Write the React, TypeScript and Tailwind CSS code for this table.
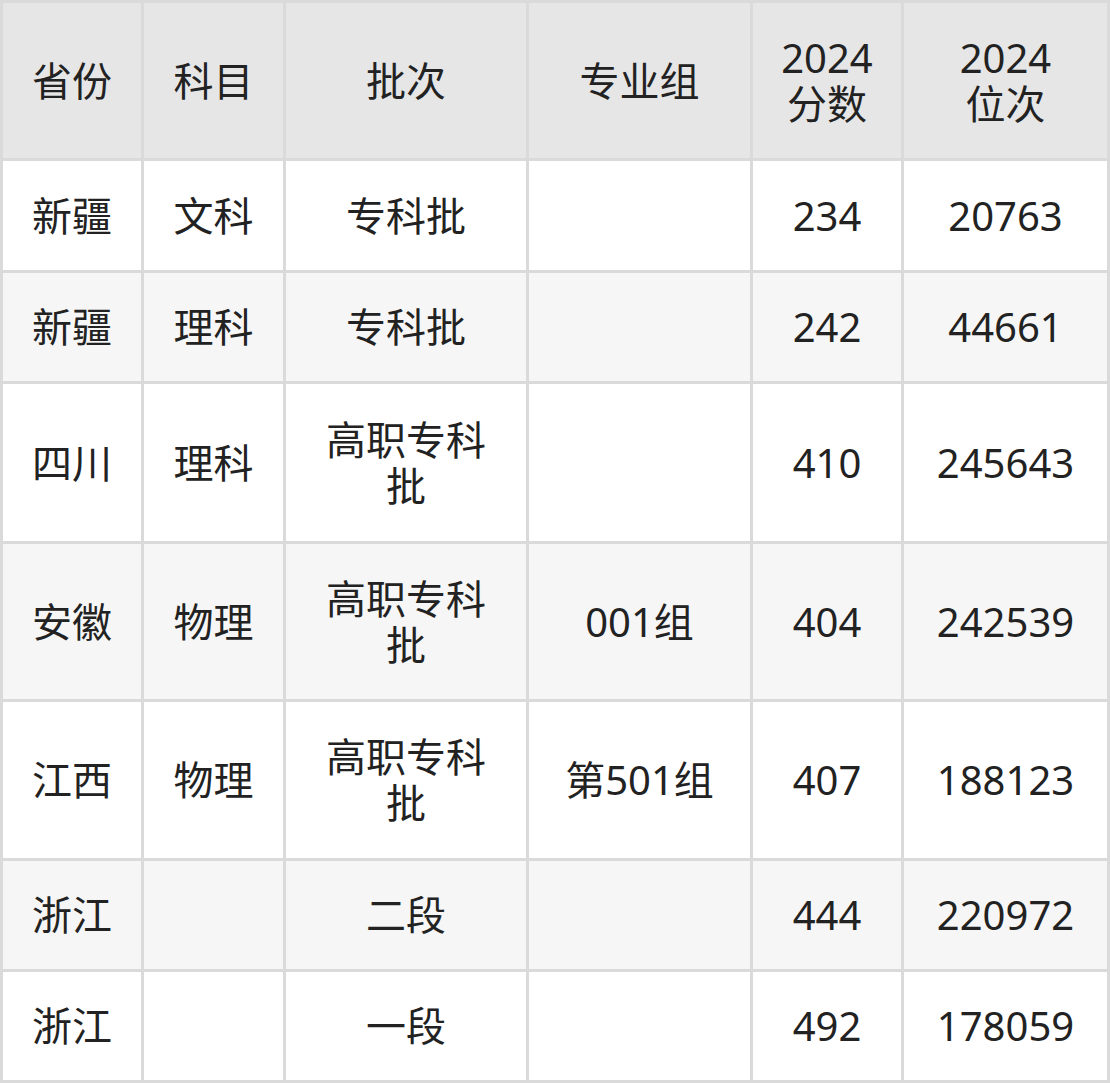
const header = ["省份", "科目", "批次", "专业组", "2024\n分数", "2024\n位次"]

const rows: string[][] = [
  ["新疆", "文科", "专科批", "", "234", "20763"],
  ["新疆", "理科", "专科批", "", "242", "44661"],
  ["四川", "理科", "高职专科\n批", "", "410", "245643"],
  ["安徽", "物理", "高职专科\n批", "001组", "404", "242539"],
  ["江西", "物理", "高职专科\n批", "第501组", "407", "188123"],
  ["浙江", "", "二段", "", "444", "220972"],
  ["浙江", "", "一段", "", "492", "178059"],
]

function Cell({ text, bg }: { text: string; bg: string }) {
  return (
    <div className={`${bg} flex items-center justify-center text-center whitespace-pre-line leading-[46px]`}>
      {text}
    </div>
  )
}

export default function App() {
  return (
    <div
      className="w-[1110px] h-[1083px] bg-[#dadada] p-[3px] text-[40px] text-[#222222]"
      style={{ fontFamily: '"Noto Sans", "Noto Sans CJK SC", sans-serif' }}
    >
      <div className="grid h-full gap-[3px] grid-cols-[138px_139px_240px_221px_148px_203px] grid-rows-[155px_109px_108px_157px_155px_156px_108px_108px]">
        {header.map((h, i) => (
          <Cell key={"h" + i} text={h} bg="bg-[#e6e6e6]" />
        ))}
        {rows.map((r, ri) =>
          r.map((c, ci) => (
            <Cell key={ri + "-" + ci} text={c} bg={ri % 2 === 0 ? "bg-white" : "bg-[#f6f6f6]"} />
          ))
        )}
      </div>
    </div>
  )
}
